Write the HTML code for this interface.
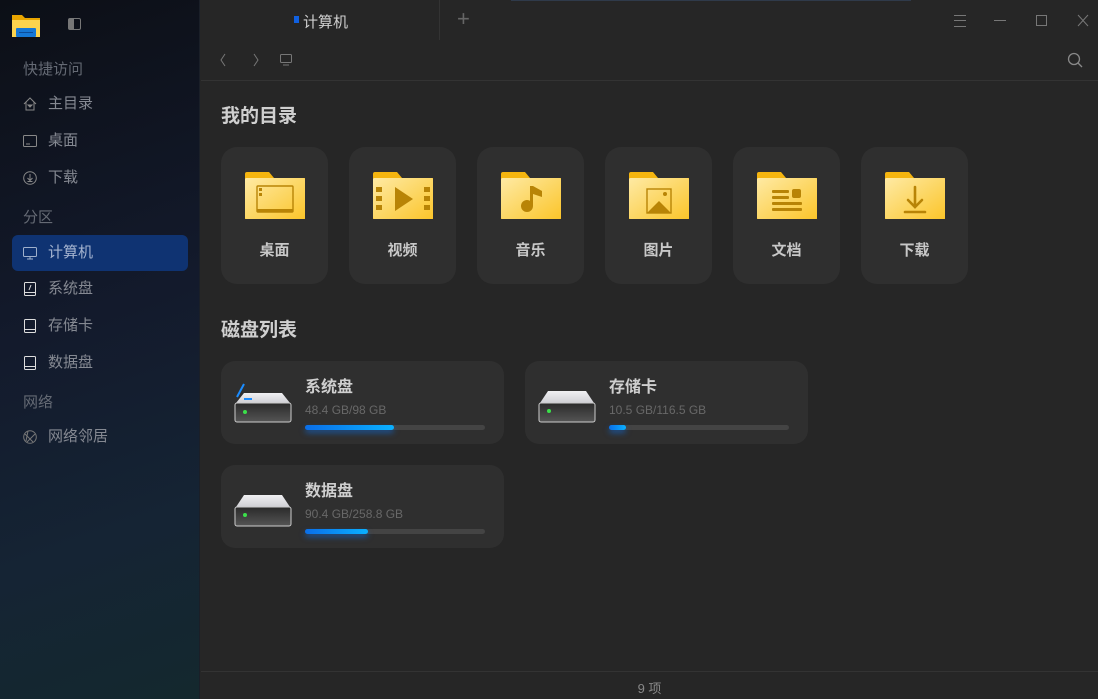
<!DOCTYPE html>
<html><head><meta charset="utf-8"><style>
*{margin:0;padding:0;box-sizing:border-box}
body{width:1098px;height:699px;overflow:hidden;background:#262626;font-family:"Liberation Sans","Noto Sans CJK SC",sans-serif;position:relative}
#side{position:absolute;left:0;top:0;width:200px;height:699px;background:linear-gradient(160deg,#0c0f16 0%,#131a2c 45%,#152434 75%,#14282e 100%);border-right:1px solid #1a1f28}
.sec{position:absolute;left:23px;font-size:15px;color:#656a74}
.it{position:absolute;left:12px;width:176px;height:36px;border-radius:6px;color:#858992;font-size:15px;line-height:36px;padding-left:36px}
.it svg{position:absolute;left:11px;top:11px}
.it.act{background:#0f3372;color:#a5b4d0}
#main{position:absolute;left:201px;top:0;right:0;bottom:0}
.card{position:absolute;width:107px;height:137px;border-radius:16px;background:#2f2f2f;top:147px}
.card svg{position:absolute;left:24px;top:25px}
.card span{position:absolute;top:92px;width:100%;text-align:center;color:#c8c8c8;font-size:15px;font-weight:bold}
.disk{position:absolute;width:283px;height:83px;border-radius:14px;background:#2f2f2f}
.disk svg{position:absolute;left:12px;top:22px}
.disk .n{position:absolute;left:84px;top:12px;color:#cfcfcf;font-size:16px;font-weight:bold}
.disk .s{position:absolute;left:84px;top:42px;color:#686868;font-size:12px}
.disk .b{position:absolute;left:84px;top:64px;width:180px;height:5px;border-radius:3px;background:#444}
.disk .b i{position:absolute;left:0;top:0;height:5px;border-radius:3px;background:linear-gradient(90deg,#0a6ee8,#0ab0ff);box-shadow:0 3px 6px rgba(10,120,255,.5)}
h2{position:absolute;left:20px;font-size:19px;color:#cfcfcf;font-weight:bold}
</style></head><body>
<svg width="1" height="1" style="position:absolute;left:0;top:0"><defs><linearGradient id="fg" x1="0" y1="0" x2="1" y2="1"><stop offset="0" stop-color="#feeaa4"/><stop offset="1" stop-color="#fbc52a"/></linearGradient><linearGradient id="dt" x1="0" y1="0" x2="0" y2="1"><stop offset="0" stop-color="#f0f0f2"/><stop offset="1" stop-color="#cfcfd4"/></linearGradient><linearGradient id="db" x1="0" y1="0" x2="0" y2="1"><stop offset="0" stop-color="#2a2a2a"/><stop offset="1" stop-color="#555"/></linearGradient></defs></svg>
<div id="side">
<svg style="position:absolute;left:12px;top:13px" width="28" height="24" viewBox="0 0 28 24"><path d="M0 2h10l3 3h15v19H0z" fill="#e8a500"/><rect x="0" y="7" width="28" height="17" fill="#fcd34d"/><rect x="4" y="15" width="20" height="9" rx="1" fill="#1577d6"/><rect x="7" y="19" width="14" height="1" fill="#0b4c99"/></svg>
<svg style="position:absolute;left:68px;top:18px" width="13" height="12"><rect x=".5" y=".5" width="12" height="11" rx="1.5" fill="none" stroke="#777"/><rect x="1" y="1" width="5" height="10" fill="#777"/></svg>
<div class="sec" style="top:58px">快捷访问</div>
<div class="it" style="top:86px"><svg width="14" height="14" viewBox="0 0 14 14" fill="none" stroke="#888"><path d="M1 7L7 1l6 6M3 5v8h8V5"/><path d="M5 8h4l-2 2z" fill="#888"/></svg>主目录</div>
<div class="it" style="top:123px"><svg width="14" height="14" viewBox="0 0 14 14" fill="none" stroke="#888"><rect x=".5" y="1.5" width="13" height="11" rx="1"/><path d="M3 10h4"/></svg>桌面</div>
<div class="it" style="top:160px"><svg width="14" height="14" viewBox="0 0 14 14" fill="none" stroke="#888"><circle cx="7" cy="7" r="6.3"/><path d="M7 3v6M4.5 7L7 9.5 9.5 7M4.5 10.5h5"/></svg>下载</div>
<div class="sec" style="top:206px">分区</div>
<div class="it act" style="top:235px"><svg width="14" height="14" viewBox="0 0 14 14" fill="none" stroke="#9fb0cc"><rect x=".5" y="1.5" width="13" height="9" rx="1"/><path d="M7 11v2M4 13h6"/></svg>计算机</div>
<div class="it" style="top:271px"><svg width="14" height="14" viewBox="0 0 14 14" fill="none" stroke="#ddd"><rect x="1.5" y=".5" width="11" height="13" rx="1"/><path d="M1.5 10.5h11M8 3L6 8"/></svg>系统盘</div>
<div class="it" style="top:308px"><svg width="14" height="14" viewBox="0 0 14 14" fill="none" stroke="#ddd"><rect x="1.5" y=".5" width="11" height="13" rx="1"/><path d="M1.5 10.5h11"/></svg>存储卡</div>
<div class="it" style="top:345px"><svg width="14" height="14" viewBox="0 0 14 14" fill="none" stroke="#ddd"><rect x="1.5" y=".5" width="11" height="13" rx="1"/><path d="M1.5 10.5h11"/></svg>数据盘</div>
<div class="sec" style="top:391px">网络</div>
<div class="it" style="top:419px"><svg width="14" height="14" viewBox="0 0 14 14" fill="none" stroke="#777"><circle cx="7" cy="7" r="6.3"/><path d="M2 4l8 8M5 1l-2 10M12 4L4 12"/></svg>网络邻居</div>
</div>
<div id="main">
<div style="position:absolute;left:0;top:0;width:239px;height:40px;border-right:1px solid #333;background:#262626"></div>
<div style="position:absolute;left:93px;top:16px;width:5px;height:7px;background:#1060e0"></div>
<div style="position:absolute;left:102px;top:11px;font-size:15px;color:#cfcfcf">计算机</div>
<div style="position:absolute;left:256px;top:6px;font-size:22px;color:#666;font-weight:300">+</div>
<div style="position:absolute;left:310px;top:0;width:400px;height:1px;background:#2f3a4a"></div>
<svg style="position:absolute;left:751px;top:14px" width="340" height="14" fill="none" stroke="#777"><path d="M2 1.5h12M2 6.5h12M2 12.5h12"/><path d="M42 6.5h12"/><rect x="84.5" y="1.5" width="10" height="10"/><path d="M126 1l10 11M136 1l-10 11"/></svg>
<svg style="position:absolute;left:18px;top:52px" width="100" height="16" fill="none" stroke="#777"><path d="M6 2L2 8l4 6M35 2l4 6-4 6"/><rect x="61.5" y="2.5" width="11" height="8" rx="1"/><path d="M64 13h6"/></svg>
<svg style="position:absolute;left:866px;top:52px" width="18" height="18" fill="none" stroke="#888" stroke-width="1.3"><circle cx="7" cy="7" r="5.5"/><path d="M11 11l4 4"/></svg>
<div style="position:absolute;left:0;top:80px;right:0;height:1px;background:#333"></div>
<h2 style="top:101px">我的目录</h2>
<div class="card" style="left:20px"><svg width="60" height="48" viewBox="0 0 60 48"><path d="M0 2a2 2 0 012-2h22l5 6h31v41H0z" fill="#f5b50f"/><rect y="6" width="60" height="41" rx="1.5" fill="url(#fg)"/><rect x="12" y="14" width="36" height="26" rx="1" fill="none" stroke="#b88406" stroke-width="1.4"/><rect x="12" y="37" width="36" height="3" fill="#b88406"/><rect x="14" y="16" width="3" height="3" fill="#b88406"/><rect x="14" y="21" width="3" height="3" fill="#b88406"/></svg><span>桌面</span></div>
<div class="card" style="left:148px"><svg width="60" height="48" viewBox="0 0 60 48"><path d="M0 2a2 2 0 012-2h22l5 6h31v41H0z" fill="#f5b50f"/><rect y="6" width="60" height="41" rx="1.5" fill="url(#fg)"/><g fill="#b88406"><rect x="3" y="15" width="6" height="5"/><rect x="3" y="24" width="6" height="5"/><rect x="3" y="33" width="6" height="5"/><rect x="51" y="15" width="6" height="5"/><rect x="51" y="24" width="6" height="5"/><rect x="51" y="33" width="6" height="5"/><path d="M22 15l18 12-18 12z"/></g></svg><span>视频</span></div>
<div class="card" style="left:276px"><svg width="60" height="48" viewBox="0 0 60 48"><path d="M0 2a2 2 0 012-2h22l5 6h31v41H0z" fill="#f5b50f"/><rect y="6" width="60" height="41" rx="1.5" fill="url(#fg)"/><g fill="#b88406"><circle cx="26" cy="34" r="6"/><rect x="29" y="14" width="3" height="20"/><path d="M32 14l9 5v6l-9-3z"/></g></svg><span>音乐</span></div>
<div class="card" style="left:404px"><svg width="60" height="48" viewBox="0 0 60 48"><path d="M0 2a2 2 0 012-2h22l5 6h31v41H0z" fill="#f5b50f"/><rect y="6" width="60" height="41" rx="1.5" fill="url(#fg)"/><g fill="#b88406"><rect x="18" y="17" width="24" height="24" fill="none" stroke="#b88406" stroke-width="1.4"/><path d="M18 41l12-12 12 12z"/><circle cx="36" cy="22" r="2"/></g></svg><span>图片</span></div>
<div class="card" style="left:532px"><svg width="60" height="48" viewBox="0 0 60 48"><path d="M0 2a2 2 0 012-2h22l5 6h31v41H0z" fill="#f5b50f"/><rect y="6" width="60" height="41" rx="1.5" fill="url(#fg)"/><g fill="#b88406"><rect x="15" y="18" width="17" height="3" rx="1"/><rect x="15" y="24" width="17" height="3" rx="1"/><rect x="35" y="17" width="9" height="9" rx="2"/><rect x="15" y="30" width="30" height="3" rx="1"/><rect x="15" y="36" width="30" height="3" rx="1"/></g></svg><span>文档</span></div>
<div class="card" style="left:660px"><svg width="60" height="48" viewBox="0 0 60 48"><path d="M0 2a2 2 0 012-2h22l5 6h31v41H0z" fill="#f5b50f"/><rect y="6" width="60" height="41" rx="1.5" fill="url(#fg)"/><g stroke="#b88406" stroke-width="2.6" fill="none" stroke-linecap="round"><path d="M30 15v20M23 28l7 7 7-7M20 40h20"/></g></svg><span>下载</span></div>
<h2 style="top:315px">磁盘列表</h2>
<div class="disk" style="left:20px;top:361px"><svg width="60" height="42" viewBox="0 0 60 42"><path d="M3 20L11 10h38l8 10z" fill="url(#dt)"/><rect x="2" y="20" width="56" height="19" rx="2" fill="url(#db)" stroke="#ccc" stroke-width="1"/><circle cx="12" cy="29" r="2" fill="#3be04a"/><path d="M4 14L11 1" stroke="#1a8cff" stroke-width="2"/><path d="M11 16h8" stroke="#1a8cff" stroke-width="2"/></svg><div class="n">系统盘</div><div class="s">48.4 GB/98 GB</div><div class="b"><i style="width:89px"></i></div></div>
<div class="disk" style="left:324px;top:361px"><svg width="60" height="42" viewBox="0 0 60 42"><path d="M3 20L11 8h38l8 12z" fill="url(#dt)"/><rect x="2" y="20" width="56" height="19" rx="2" fill="url(#db)" stroke="#ccc" stroke-width="1"/><circle cx="12" cy="28" r="2" fill="#3be04a"/></svg><div class="n">存储卡</div><div class="s">10.5 GB/116.5 GB</div><div class="b"><i style="width:17px"></i></div></div>
<div class="disk" style="left:20px;top:465px"><svg width="60" height="42" viewBox="0 0 60 42"><path d="M3 20L11 8h38l8 12z" fill="url(#dt)"/><rect x="2" y="20" width="56" height="19" rx="2" fill="url(#db)" stroke="#ccc" stroke-width="1"/><circle cx="12" cy="28" r="2" fill="#3be04a"/></svg><div class="n">数据盘</div><div class="s">90.4 GB/258.8 GB</div><div class="b"><i style="width:63px"></i></div></div>
<div style="position:absolute;left:0;right:0;top:671px;height:1px;background:#333"></div>
<div style="position:absolute;left:0;right:0;top:678px;text-align:center;font-size:13px;color:#888">9 项</div>
</div>
</body></html>
